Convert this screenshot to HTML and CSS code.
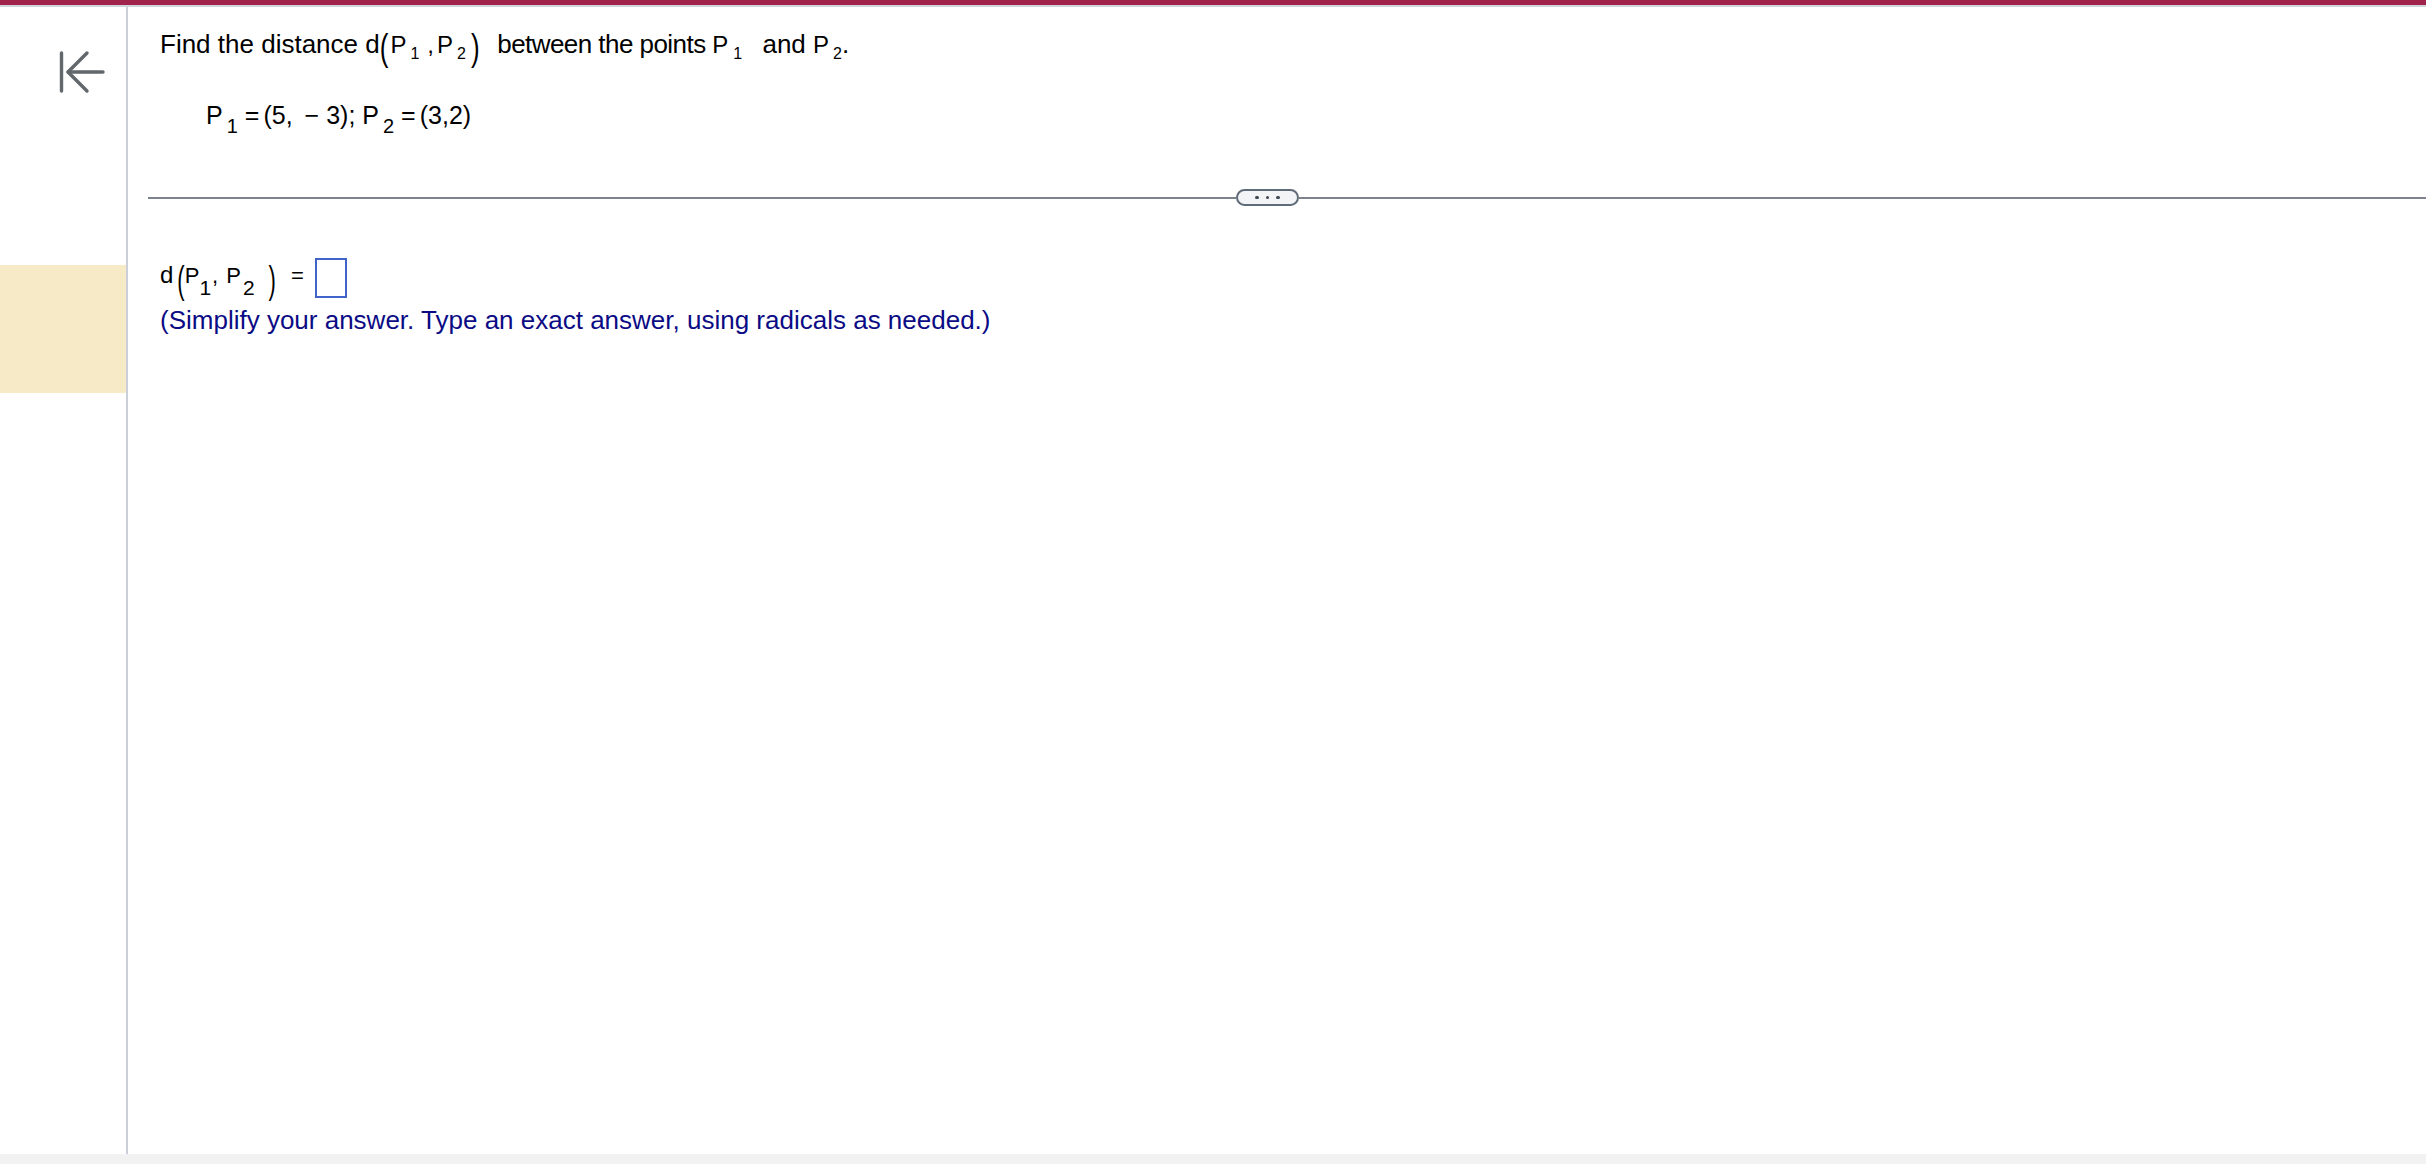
FILE: index.html
```html
<!DOCTYPE html>
<html lang="en">
<head>
<meta charset="utf-8">
<title>Distance between points</title>
<link rel="stylesheet" href="styles.css">
</head>
<body>
<div class="page">
  <div class="topbar"></div>
  <div class="main">
    <aside class="sidebar">
      <button class="back" aria-label="Back">
        <svg width="52" height="48" viewBox="0 0 52 48" fill="none" stroke="#62676b" stroke-width="3.4" stroke-linecap="round" stroke-linejoin="round">
          <line x1="5.5" y1="5" x2="5.5" y2="43"/>
          <polyline points="31,5 12,24 31,43"/>
          <line x1="12" y1="24" x2="47" y2="24"/>
        </svg>
      </button>
      <div class="highlight"></div>
    </aside>
    <section class="content">
      <div class="question">
        <p class="q-line">Find the distance <span class="mi">d</span><span class="paren pl">(</span><span class="mp">P</span><sub class="sub s1">1</sub><span class="mcomma">,</span><span class="mp mp2">P</span><sub class="sub s1 s1b">2</sub><span class="paren pr">)</span><span class="tight"> between the points </span><span class="mp">P</span><sub class="sub s1 s1c">1</sub> and <span class="mp">P</span><sub class="sub s1 s1b">2</sub>.</p>
        <p class="q-given">P<sub class="sub s2">1</sub><span class="op">=</span>(5,<span class="minus">−</span> 3); P<sub class="sub s2">2</sub><span class="op">=</span>(3,2)</p>
      </div>
      <div class="divider">
        <div class="rule rule-left"></div>
        <button class="more" aria-label="More">
          <span class="dot"></span><span class="dot"></span><span class="dot"></span>
        </button>
        <div class="rule rule-right"></div>
      </div>
      <div class="answer">
        <div class="answer-row">
          <span class="amath"><span class="ad">d</span><span class="aparen apl">(</span><span class="ap">P</span><sub class="sub s3">1</sub><span class="acomma">,</span><span class="ap ap2">P</span><sub class="sub s3 s3b">2</sub><span class="aparen apr">)</span><span class="eq">=</span></span>
          <span class="box"></span>
        </div>
        <p class="hint">(Simplify your answer. Type an exact answer, using radicals as needed.)</p>
      </div>
    </section>
  </div>
  <div class="bottombar"></div>
</div>
</body>
</html>
```
FILE: styles.css
```css
html, body {
  margin: 0;
  padding: 0;
  background: #ffffff;
}
body {
  font-family: "Liberation Sans", Arial, sans-serif;
  color: #000000;
}
.page {
  height: 1164px;
  display: flex;
  flex-direction: column;
  overflow: hidden;
}
.topbar {
  height: 5px;
  background: #a0234b;
  border-bottom: 2px solid #d3d5dc;
  flex: none;
}
.main {
  flex: 1;
  display: flex;
  min-height: 0;
}
.sidebar {
  width: 126px;
  flex: none;
  border-right: 2px solid #cbcfd9;
  padding-top: 41px;
  display: flex;
  flex-direction: column;
}
.back {
  margin: 0 0 0 56px;
  padding: 0;
  border: 0;
  background: none;
  width: 52px;
  height: 48px;
  display: block;
}
.back svg { display: block; }
.highlight {
  margin-top: 169px;
  height: 128px;
  background: #f7eac6;
}
.content {
  flex: 1;
  padding-left: 20px;
  padding-top: 19px;
  min-width: 0;
}
.question, .answer {
  padding-left: 12px;
}
p { margin: 0; }

/* question line */
.q-line {
  font-size: 26px;
  line-height: 36px;
  white-space: nowrap;
}
.tight { letter-spacing: -0.55px; }
.mp { font-size: 24px; }
.mp2 { margin-left: 3px; }
.mcomma {
  font-size: 24px;
  margin-left: 8px;
}
.paren {
  display: inline-block;
  line-height: 0;
  font-size: 26px;
  transform: translateY(3px) scaleY(1.43);
}
.pl { margin-right: 2px; }
.pr { margin-left: 5px; margin-right: 11px; }
.sub {
  line-height: 0;
  vertical-align: baseline;
  position: relative;
}
.s1 {
  font-size: 16px;
  top: 6px;
  margin-left: 4px;
}
.s1b { margin-left: 4px; }
.s1c { margin-left: 5px; margin-right: 13px; }

/* given points */
.q-given {
  margin-top: 34px;
  padding-left: 46px;
  font-size: 25px;
  line-height: 36px;
  white-space: nowrap;
}
.s2 {
  font-size: 20px;
  top: 9px;
  margin-left: 4px;
}
.op {
  margin-left: 7px;
  margin-right: 4px;
}
.minus { margin-left: 12px; margin-right: 0; }

/* divider */
.divider {
  margin-top: 56px;
  display: flex;
  align-items: center;
  height: 17px;
}
.rule {
  height: 2px;
  background: #7d838e;
}
.rule-left {
  width: 1088px;
  flex: none;
}
.rule-right { flex: 1; }
.more {
  flex: none;
  width: 63px;
  height: 17px;
  box-sizing: border-box;
  border: 2px solid #5f6b78;
  border-radius: 9px;
  background: #f3f4f6;
  padding: 0;
  display: flex;
  align-items: center;
  justify-content: center;
  gap: 7px;
}
.dot {
  width: 3.5px;
  height: 3.5px;
  border-radius: 50%;
  background: #3e4852;
}

/* answer */
.answer { margin-top: 52px; }
.answer-row {
  display: flex;
  align-items: flex-start;
  height: 40px;
}
.amath {
  font-size: 24px;
  line-height: 33px;
  white-space: nowrap;
}
.ap { font-size: 22px; }
.ap2 { margin-left: 8px; }
.acomma {
  font-size: 22px;
  margin-left: 1px;
}
.aparen {
  display: inline-block;
  line-height: 0;
  font-size: 22px;
  transform: translateY(4px) scaleY(1.79);
}
.apl { margin-left: 4px; }
.apr { margin-left: 14px; }
.s3 {
  font-size: 21px;
  top: 12px;
}
.s3b { margin-left: 2px; }
.eq {
  font-size: 22px;
  margin-left: 15px;
}
.box {
  width: 32px;
  height: 40px;
  box-sizing: border-box;
  border: 2px solid #3f63c6;
  margin-left: 11px;
  flex: none;
}
.hint {
  margin-top: 7px;
  font-size: 26px;
  line-height: 30px;
  color: #0b0b85;
  white-space: nowrap;
}
.bottombar {
  height: 10px;
  background: #f2f2f2;
  flex: none;
}
```
